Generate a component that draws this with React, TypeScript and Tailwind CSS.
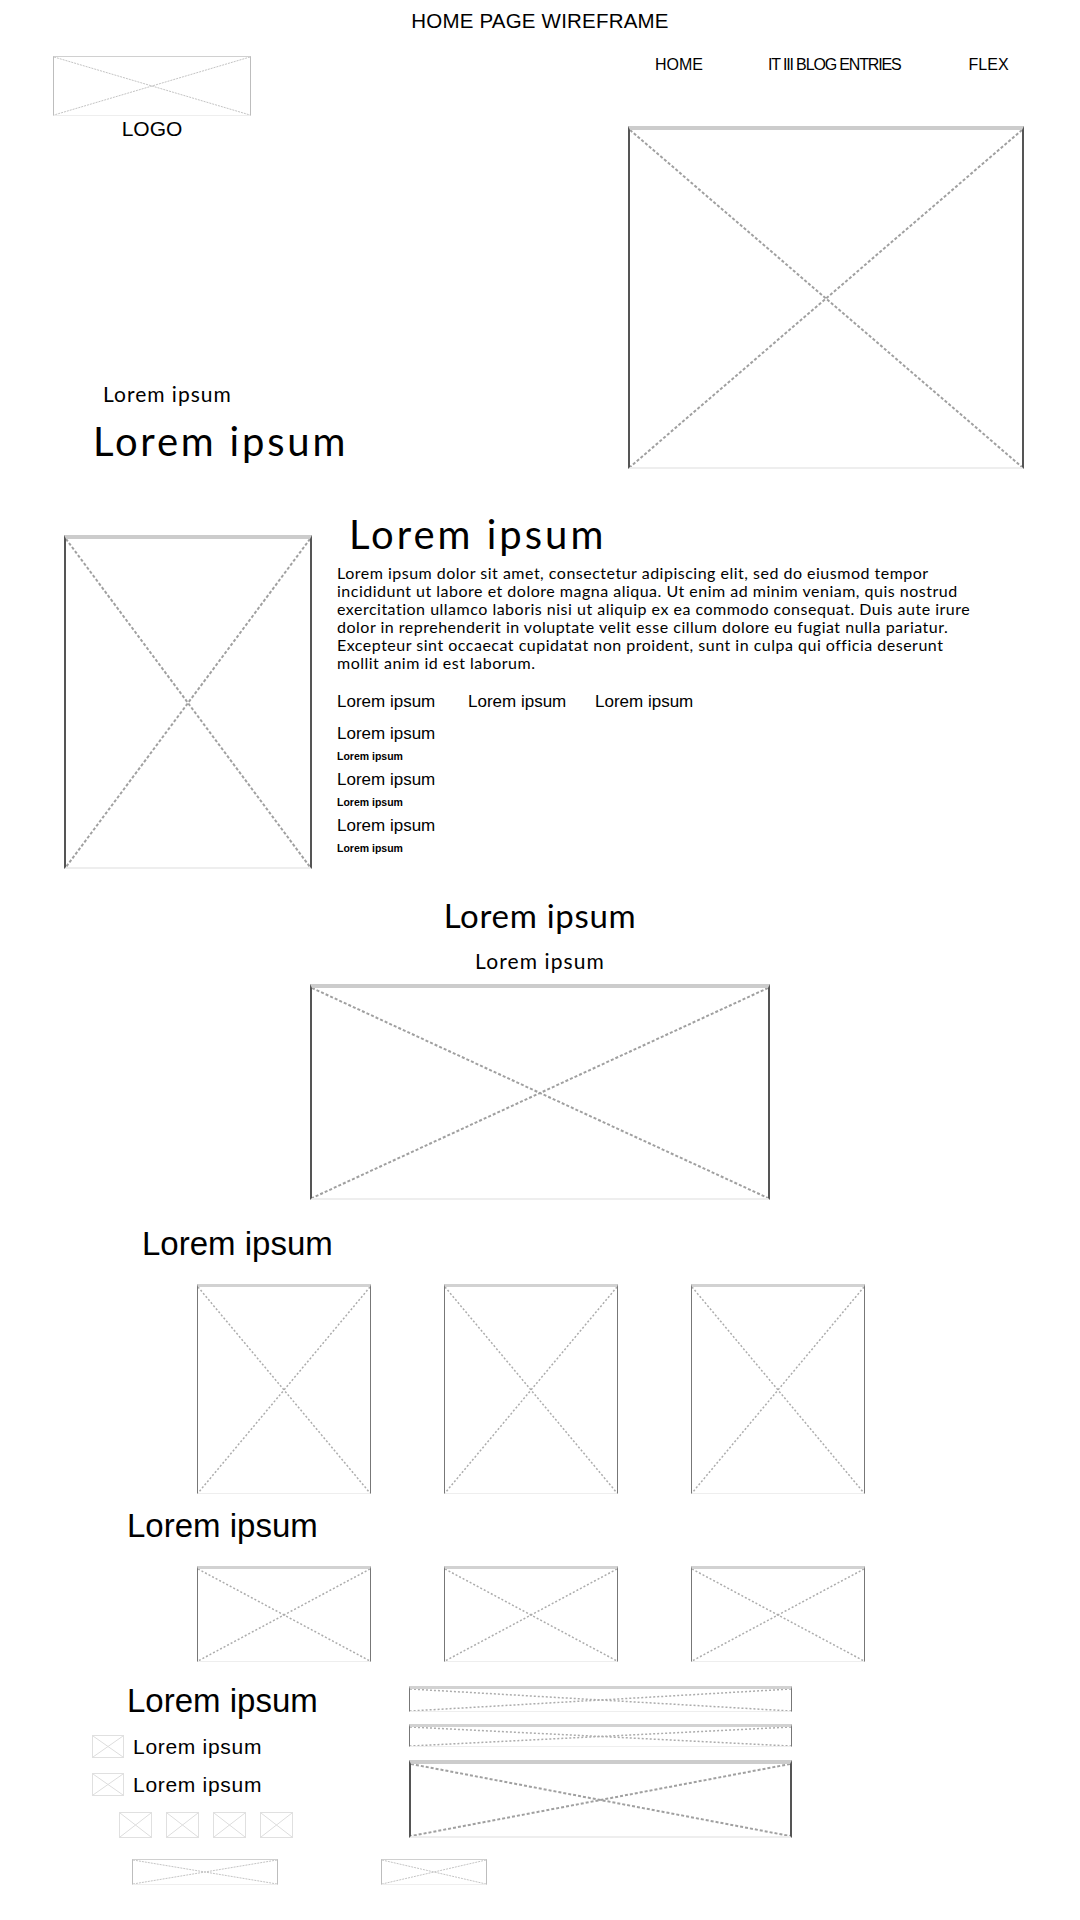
const box = {
  big: "border-x-2 border-x-[#555555] border-t-[4px] border-t-[#cccccc] border-b-2 border-b-[#eeeeee]",
  mid: "border-x border-x-[#777777] border-t-[3px] border-t-[#d2d2d2] border-b border-b-[#eeeeee]",
  thin: "border border-[#bdbdbd] border-t-[#d0d0d0] border-b-[#eeeeee]",
  tiny: "border border-[#e0e0e0]",
};

const line = {
  big: { stroke: "#a0a0a0", w: 2, dash: "3 2" },
  mid: { stroke: "#acacac", w: 1.5, dash: "2 2" },
  thin: { stroke: "#c4c4c4", w: 1, dash: "2 1" },
  tiny: { stroke: "#dddddd", w: 1, dash: "" },
};

type V = "big" | "mid" | "thin" | "tiny";

const Ph = ({ v = "mid", className = "" }: { v?: V; className?: string }) => {
  const l = line[v];
  return (
    <div className={`shrink-0 bg-white ${box[v]} ${className}`}>
      <svg className="block h-full w-full" viewBox="0 0 100 100" preserveAspectRatio="none">
        <line x1="0" y1="0" x2="100" y2="100" stroke={l.stroke} strokeWidth={l.w} strokeDasharray={l.dash} vectorEffect="non-scaling-stroke" />
        <line x1="100" y1="0" x2="0" y2="100" stroke={l.stroke} strokeWidth={l.w} strokeDasharray={l.dash} vectorEffect="non-scaling-stroke" />
      </svg>
    </div>
  );
};

const helv = "font-['Liberation_Sans',Arial,sans-serif]";
const geo = "font-['Lato','Noto_Sans',sans-serif]";

const paragraph = [
  "Lorem ipsum dolor sit amet, consectetur adipiscing elit, sed do eiusmod tempor",
  "incididunt ut labore et dolore magna aliqua. Ut enim ad minim veniam, quis nostrud",
  "exercitation ullamco laboris nisi ut aliquip ex ea commodo consequat. Duis aute irure",
  "dolor in reprehenderit in voluptate velit esse cillum dolore eu fugiat nulla pariatur.",
  "Excepteur sint occaecat cupidatat non proident, sunt in culpa qui officia deserunt",
  "mollit anim id est laborum.",
];

export default function App() {
  return (
    <div className={`min-h-[1920px] w-[1080px] bg-white text-black ${helv}`}>
      <h1 className="pt-[9px] text-center text-[20.5px] leading-[24px] tracking-[0.2px]">HOME PAGE WIREFRAME</h1>

      {/* header + hero */}
      <div className="flex">
        <div className="w-[628px] pl-[53px]">
          <Ph v="thin" className="mt-[23px] h-[60px] w-[198px]" />
          <div className="mt-[1px] w-[198px] text-center text-[21px] leading-[24px]">LOGO</div>
          <p className={`ml-[50px] mt-[241px] text-[21px] leading-[24px] tracking-[1px] ${geo}`}>Lorem ipsum</p>
          <p className={`ml-[40px] mt-[11px] text-[40px] leading-[48px] tracking-[2.8px] ${geo}`}>Lorem ipsum</p>
        </div>
        <div className="w-[396px]">
          <nav className="mt-[23px] flex pl-[27px] text-[16px] leading-[18px]">
            <a>HOME</a>
            <a className="ml-[65px] tracking-[-1.15px]">IT III BLOG ENTRIES</a>
            <a className="ml-[68px]">FLEX</a>
          </nav>
          <Ph v="big" className="mt-[52px] h-[343px] w-[396px]" />
        </div>
      </div>

      {/* about */}
      <div className="mt-[41px] flex items-start">
        <Ph v="big" className="ml-[64px] mt-[25px] h-[334px] w-[248px]" />
        <div className="ml-[25px]">
          <h2 className={`ml-[12px] text-[40px] leading-[48px] tracking-[3px] ${geo}`}>Lorem ipsum</h2>
          <div className={`mt-[6px] text-[16px] leading-[18px] tracking-[0.5px] ${geo}`}>
            {paragraph.map((t) => (
              <p key={t} className="whitespace-nowrap">{t}</p>
            ))}
          </div>
          <div className="mt-[20px] flex text-[17px] leading-[20px]">
            <span className="w-[131px]">Lorem ipsum</span>
            <span className="w-[127px]">Lorem ipsum</span>
            <span>Lorem ipsum</span>
          </div>
          <ul className="mt-[10px]">
            {[0, 1, 2].map((i) => (
              <li key={i}>
                <div className="flex h-[23px] items-center text-[17px]">Lorem ipsum</div>
                <div className="flex h-[23px] items-center text-[10.5px] font-bold">Lorem ipsum</div>
              </li>
            ))}
          </ul>
        </div>
      </div>

      {/* feature */}
      <section className="mt-[28px] flex flex-col items-center">
        <h2 className={`text-[33px] leading-[36px] tracking-[0.7px] ${geo}`}>Lorem ipsum</h2>
        <p className={`mt-[16px] text-[21px] leading-[24px] tracking-[1.1px] ${geo}`}>Lorem ipsum</p>
        <Ph v="big" className="mt-[11px] h-[216px] w-[460px]" />
      </section>

      {/* cards tall */}
      <section className="mt-[26px]">
        <h2 className="pl-[142px] text-[33px] leading-[36px]">Lorem ipsum</h2>
        <div className="ml-[197px] mt-[22px] flex gap-[73px]">
          <Ph className="h-[210px] w-[174px]" />
          <Ph className="h-[210px] w-[174px]" />
          <Ph className="h-[210px] w-[174px]" />
        </div>
      </section>

      {/* cards short */}
      <section className="mt-[14px]">
        <h2 className="pl-[127px] text-[33px] leading-[36px]">Lorem ipsum</h2>
        <div className="ml-[197px] mt-[22px] flex gap-[73px]">
          <Ph className="h-[96px] w-[174px]" />
          <Ph className="h-[96px] w-[174px]" />
          <Ph className="h-[96px] w-[174px]" />
        </div>
      </section>

      {/* footer */}
      <section className="mt-[21px]">
        <div className="flex">
          <div className="w-[409px]">
            <h2 className="pl-[127px] text-[33px] leading-[36px]">Lorem ipsum</h2>
            <div className="ml-[92px] mt-[16px] flex items-center">
              <Ph v="tiny" className="h-[23px] w-[32px]" />
              <span className="ml-[9px] text-[21px] leading-[23px] tracking-[0.7px]">Lorem ipsum</span>
            </div>
            <div className="ml-[92px] mt-[15px] flex items-center">
              <Ph v="tiny" className="h-[23px] w-[32px]" />
              <span className="ml-[9px] text-[21px] leading-[23px] tracking-[0.7px]">Lorem ipsum</span>
            </div>
            <div className="ml-[119px] mt-[16px] flex gap-[14px]">
              <Ph v="tiny" className="h-[26px] w-[33px]" />
              <Ph v="tiny" className="h-[26px] w-[33px]" />
              <Ph v="tiny" className="h-[26px] w-[33px]" />
              <Ph v="tiny" className="h-[26px] w-[33px]" />
            </div>
          </div>
          <div className="w-[383px]">
            <Ph className="mt-[3px] h-[26px] w-[383px]" />
            <Ph className="mt-[12px] h-[23px] w-[383px]" />
            <Ph v="big" className="mt-[13px] h-[78px] w-[383px]" />
          </div>
        </div>
        <div className="mt-[21px] flex">
          <Ph v="thin" className="ml-[132px] h-[26px] w-[146px]" />
          <Ph v="thin" className="ml-[103px] h-[26px] w-[106px]" />
        </div>
      </section>
    </div>
  );
}
